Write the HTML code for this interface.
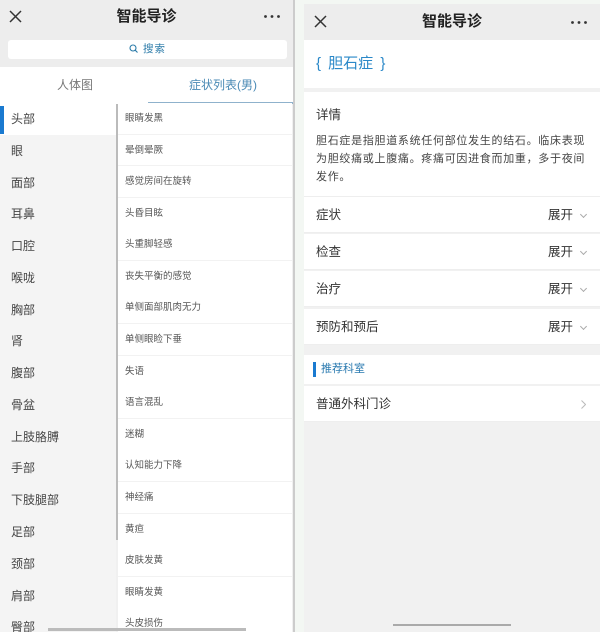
<!DOCTYPE html>
<html><head><meta charset="utf-8"><style>
*{margin:0;padding:0;box-sizing:border-box}
body{width:600px;height:632px;background:#f3f7f3;font-family:"Liberation Sans","Noto Sans CJK SC",sans-serif;position:relative;overflow:hidden;color:#333}
.abs{position:absolute}
#L{left:0;top:0;width:295px;height:632px;background:#f0f0f0;overflow:hidden;border-right:2px solid #ccc}
#R{left:304px;top:4px;width:296px;height:628px;background:#f1f1f1;overflow:hidden}
.hdr{height:33px;background:#ededed;font-size:15px;font-weight:bold;text-align:center;line-height:33px;color:#222}
.x{position:absolute;left:9px;top:10px;width:13px;height:13px}
.dots{position:absolute;right:13px;top:15px;width:16px;height:3px}
.li{position:absolute;left:0;width:116px;height:32px;line-height:32px;padding-left:11px;font-size:12px;color:#444}
.ri{position:absolute;left:118px;width:174px;height:31.6px;line-height:31px;padding-left:7px;font-size:9.5px;color:#555;background:#fff;border-bottom:1px solid #f2f2f2}
.row{position:absolute;left:0;width:296px;height:36px;background:#fff;font-size:12.5px;line-height:36px;padding-left:12px;color:#333;border-bottom:1px solid #eee}
.row .r{position:absolute;right:14px;top:0}
.chev{display:inline-block;width:5px;height:5px;border-right:1px solid #aaa;border-bottom:1px solid #aaa;transform:rotate(45deg);margin-left:8px;position:relative;top:-2px}
</style></head><body>
<div id="L" class="abs">
 <div class="hdr" style="position:relative">智能导诊
  <svg class="x" viewBox="0 0 13 13"><path d="M1 1L12 12M12 1L1 12" stroke="#333" stroke-width="1.5"/></svg>
  <svg class="dots" viewBox="0 0 16 3"><circle cx="1.5" cy="1.5" r="1.4" fill="#333"/><circle cx="8" cy="1.5" r="1.4" fill="#333"/><circle cx="14.5" cy="1.5" r="1.4" fill="#333"/></svg></div>
 <div class="abs" style="top:33px;left:0;width:295px;height:34px;background:#ededed"></div>
 <div class="abs" style="top:40px;left:8px;width:279px;height:19px;background:#fff;border-radius:3px;text-align:center;font-size:10.5px;line-height:19px;color:#2a7aa8;letter-spacing:1px"><svg width="9" height="9" viewBox="0 0 9 9" style="vertical-align:-1px;margin-right:5px"><circle cx="4" cy="4" r="3" fill="none" stroke="#2a7aa8" stroke-width="1.1"/><path d="M6.2 6.2L8.5 8.5" stroke="#2a7aa8" stroke-width="1.1"/></svg>搜索</div>
 <div class="abs" style="top:67px;left:0;width:295px;height:37px;background:#fff"></div>
 <div class="abs" style="top:76px;left:57px;font-size:12px;color:#777">人体图</div>
 <div class="abs" style="top:76px;left:189px;font-size:12px;color:#4a8ab5">症状列表(男)</div>
 <div class="abs" style="top:102px;left:148px;width:147px;height:2px;background:#8fb2cc"></div>
 <div class="abs" style="top:104px;left:0;width:116px;height:528px;background:#f4f4f4"></div>
 <div class="abs" style="top:104px;left:116px;width:2px;height:436px;background:#bbb"></div>
 <div class="li" style="top:103px;background:#fff">头部</div>
 <div class="abs" style="top:106px;left:0;width:4px;height:28px;background:#1a7ad0"></div>
 <div class="li" style="top:135px">眼</div><div class="li" style="top:167px">面部</div><div class="li" style="top:198px">耳鼻</div><div class="li" style="top:230px">口腔</div><div class="li" style="top:262px">喉咙</div><div class="li" style="top:294px">胸部</div><div class="li" style="top:325px">肾</div><div class="li" style="top:357px">腹部</div><div class="li" style="top:389px">骨盆</div><div class="li" style="top:421px">上肢胳膊</div><div class="li" style="top:452px">手部</div><div class="li" style="top:484px">下肢腿部</div><div class="li" style="top:516px">足部</div><div class="li" style="top:548px">颈部</div><div class="li" style="top:580px">肩部</div><div class="li" style="top:611px">臀部</div>
 <div class="ri" style="top:103px">眼睛发黑</div><div class="ri" style="top:134.6px">晕倒晕厥</div><div class="ri" style="top:166px">感觉房间在旋转</div><div class="ri" style="top:198px">头昏目眩</div><div class="ri" style="top:229px">头重脚轻感</div><div class="ri" style="top:261px">丧失平衡的感觉</div><div class="ri" style="top:292px">单侧面部肌肉无力</div><div class="ri" style="top:324px">单侧眼睑下垂</div><div class="ri" style="top:356px">失语</div><div class="ri" style="top:387px">语言混乱</div><div class="ri" style="top:419px">迷糊</div><div class="ri" style="top:450px">认知能力下降</div><div class="ri" style="top:482px">神经痛</div><div class="ri" style="top:514px">黄疸</div><div class="ri" style="top:545px">皮肤发黄</div><div class="ri" style="top:577px">眼睛发黄</div><div class="ri" style="top:608px">头皮损伤</div>
 <div class="abs" style="top:628px;left:48px;width:198px;height:3px;background:#bbb"></div>
</div>
<div id="R" class="abs">
 <div class="hdr" style="position:relative;height:36px;line-height:36px">智能导诊
  <svg class="x" viewBox="0 0 13 13" style="top:11px;left:10px"><path d="M1 1L12 12M12 1L1 12" stroke="#333" stroke-width="1.5"/></svg>
  <svg class="dots" viewBox="0 0 16 3" style="top:17px"><circle cx="1.5" cy="1.5" r="1.4" fill="#333"/><circle cx="8" cy="1.5" r="1.4" fill="#333"/><circle cx="14.5" cy="1.5" r="1.4" fill="#333"/></svg></div>
 <div class="abs" style="top:36px;left:0;width:296px;height:48px;background:#fff;font-size:15px;line-height:48px;padding-left:12px;color:#2a88c8;word-spacing:3px">{&nbsp;胆石症&nbsp;}</div>
 <div class="abs" style="top:88px;left:0;width:296px;height:105px;background:#fff;padding:12px 12px;border-bottom:1px solid #eee">
  <div style="font-size:12.5px;color:#333;margin-bottom:9px">详情</div>
  <div style="font-size:11px;line-height:18px;color:#444;letter-spacing:0.7px">胆石症是指胆道系统任何部位发生的结石。临床表现为胆绞痛或上腹痛。疼痛可因进食而加重，多于夜间发作。</div>
 </div>
 <div class="row" style="top:193px">症状<span class="r">展开<i class="chev"></i></span></div>
 <div class="row" style="top:230px">检查<span class="r">展开<i class="chev"></i></span></div>
 <div class="row" style="top:267px">治疗<span class="r">展开<i class="chev"></i></span></div>
 <div class="row" style="top:305px">预防和预后<span class="r">展开<i class="chev"></i></span></div>
 <div class="abs" style="top:351px;left:0;width:296px;height:29px;background:#fff;font-size:11px;line-height:29px;padding-left:17px;color:#2a7ab0">推荐科室</div>
 <div class="abs" style="top:358px;left:9px;width:3px;height:15px;background:#1a7ad0"></div>
 <div class="row" style="top:382px">普通外科门诊<svg style="position:absolute;right:14px;top:14px" width="5" height="9" viewBox="0 0 5 9"><path d="M0.5 0.5L4.5 4.5L0.5 8.5" fill="none" stroke="#bbb" stroke-width="1"/></svg></div>
 <div class="abs" style="top:620px;left:89px;width:118px;height:2px;background:#aaa"></div>
</div>
</body></html>
